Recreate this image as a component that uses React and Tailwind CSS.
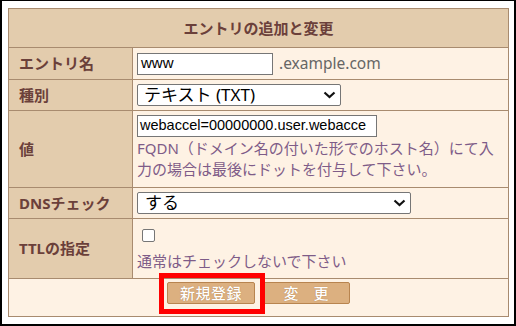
import React from "react";

const jp = { fontFamily: '"Noto Sans", "Noto Sans CJK JP", sans-serif' };

function Chevron() {
  return (
    <svg width="13" height="8" viewBox="0 0 13 8" className="absolute right-[4px] top-1/2 -translate-y-1/2">
      <path d="M1.5 1.5 L6.5 6 L11.5 1.5" fill="none" stroke="#111" strokeWidth="2.2" />
    </svg>
  );
}

function Row({ label, h, children }) {
  return (
    <div className={`flex ${h} border-b border-[#a88b6f]`}>
      <div className="w-[124px] shrink-0 bg-[#e3ccad] border-r border-[#a88b6f] flex items-center pl-[10px] font-bold text-[15px] text-[#6b403a]">
        {label}
      </div>
      <div className="flex-1 bg-[#fef2e4] pl-[4px]">{children}</div>
    </div>
  );
}

export default function App() {
  return (
    <div
      className="relative w-[516px] h-[326px] box-border bg-white border-black border-t border-l-2 border-r-2 border-b-2 pt-[7px] pl-[6px]"
      style={jp}
    >
      <div className="w-[501px] border border-[#a88b6f] flex flex-col">
        <div className="h-[39px] bg-[#e3ccad] border-b border-[#a88b6f] flex items-center justify-center font-bold text-[15px] text-[#6b403a]">
          エントリの追加と変更
        </div>
        <Row label="エントリ名" h="h-[32px]">
          <div className="h-full flex items-center">
            <div className="w-[136px] h-[22px] border border-[#767676] bg-white flex items-center pl-[3px] text-[15px] text-black" style={{ fontFamily: '"Liberation Sans", Arial, sans-serif' }}>
              www
            </div>
            <span className="ml-[6px] text-[15.5px] text-[#666]">.example.com</span>
          </div>
        </Row>
        <Row label="種別" h="h-[31px]">
          <div className="h-full flex items-center">
            <div className="relative w-[204px] h-[22px] border border-[#767676] rounded-[2px] bg-white flex items-center pl-[6px] text-[17px] text-black">
              テキスト (TXT)
              <Chevron />
            </div>
          </div>
        </Row>
        <Row label="値" h="h-[77px]">
          <div className="pt-[4px]">
            <div className="w-[240px] h-[22px] border border-[#767676] bg-white flex items-center pl-[2px] text-[14.5px] text-black overflow-hidden whitespace-nowrap" style={{ fontFamily: '"Liberation Sans", Arial, sans-serif' }}>
              webaccel=00000000.user.webacce
            </div>
            <div className="text-[15px] leading-[21px] text-[#7e5c88] whitespace-nowrap mt-[1px]">
              <div>FQDN（ドメイン名の付いた形でのホスト名）にて入</div>
              <div>力の場合は最後にドットを付与して下さい。</div>
            </div>
          </div>
        </Row>
        <Row label="DNSチェック" h="h-[31px]">
          <div className="h-full flex items-center">
            <div className="relative w-[274px] h-[22px] border border-[#767676] rounded-[2px] bg-white flex items-center pl-[7px] text-[17px] text-black">
              する
              <Chevron />
            </div>
          </div>
        </Row>
        <Row label="TTLの指定" h="h-[60px]">
          <div className="pt-[10px] pl-[5px]">
            <div className="w-[13px] h-[13px] border border-[#767676] rounded-[2px] bg-white" />
          </div>
          <div className="mt-[8px] text-[15px] text-[#7e5c88] whitespace-nowrap">通常はチェックしないで下さい</div>
        </Row>
        <div className="h-[37px] bg-[#fef2e4] flex justify-center items-start pt-[3px] gap-[7px]">
          <div className="w-[88px] h-[22px] bg-[#dcb080] border border-[#b8844f] rounded-[2px] flex items-center justify-center text-[15px] font-medium text-white tracking-[0.5px]" style={{ textShadow: "0 0 1px #a07040" }}>
            新規登録
          </div>
          <div className="w-[88px] h-[22px] bg-[#dcb080] border border-[#b8844f] rounded-[2px] flex items-center justify-center text-[15px] font-medium text-white" style={{ textShadow: "0 0 1px #a07040" }}>
            変　更
          </div>
        </div>
      </div>
      <div className="absolute left-[157px] top-[272px] w-[106px] h-[41px] border-[5px] border-[#ff0000]" />
    </div>
  );
}
